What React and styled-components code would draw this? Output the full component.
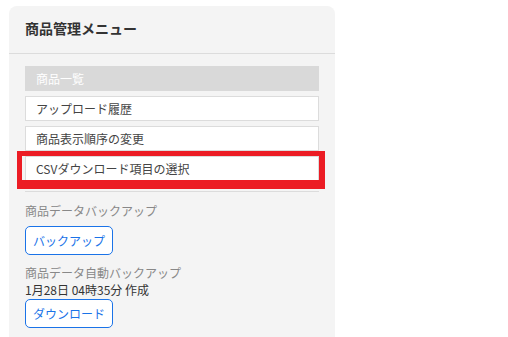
import React from "react";
import styled, { createGlobalStyle } from "styled-components";

const menuItems = [
  { label: "商品一覧", active: true },
  { label: "アップロード履歴" },
  { label: "商品表示順序の変更" },
  { label: "CSVダウンロード項目の選択", highlight: true },
];

export default function App() {
  return (
    <>
      <GlobalStyle />
      <Page>
        <Panel>
          <Header>商品管理メニュー</Header>
          <Body>
            <MenuList>
              {menuItems.map((item) => (
                <MenuItem key={item.label} $active={item.active}>
                  {item.label}
                  {item.highlight && <Highlight />}
                </MenuItem>
              ))}
            </MenuList>
            <Divider />
            <SectionLabel $top={10}>商品データバックアップ</SectionLabel>
            <ActionButton $top={6}>バックアップ</ActionButton>
            <SectionLabel $top={9}>商品データ自動バックアップ</SectionLabel>
            <DateText>1月28日 04時35分 作成</DateText>
            <ActionButton $top={0}>ダウンロード</ActionButton>
          </Body>
        </Panel>
      </Page>
    </>
  );
}

const GlobalStyle = createGlobalStyle`
  body {
    margin: 0;
    background: #ffffff;
    font-family: "Noto Sans CJK JP", "Noto Sans", sans-serif;
  }
`;

const Page = styled.div`
  padding: 6px 0 0 9px;
`;

const Panel = styled.div`
  width: 326px;
  min-height: 331px;
  background: #f4f4f4;
  border-radius: 8px 8px 0 0;
`;

const Header = styled.div`
  height: 48px;
  box-sizing: border-box;
  padding: 0 16px 3px;
  display: flex;
  align-items: center;
  border-bottom: 1px solid #dcdcdc;
  font-size: 14px;
  font-weight: bold;
  color: #333;
`;

const Body = styled.div`
  padding: 12px 16px 0;
  display: flex;
  flex-direction: column;
  align-items: flex-start;
`;

const MenuList = styled.div`
  width: 100%;
  display: flex;
  flex-direction: column;
  gap: 5px;
`;

const MenuItem = styled.div`
  position: relative;
  height: 25px;
  box-sizing: border-box;
  padding-left: 10px;
  display: flex;
  align-items: center;
  font-size: 12px;
  color: ${(p) => (p.$active ? "#ffffff" : "#444")};
  background: ${(p) => (p.$active ? "#d9d9d9" : "#ffffff")};
  border: 1px solid ${(p) => (p.$active ? "#d9d9d9" : "#dcdcdc")};
`;

const Highlight = styled.div`
  position: absolute;
  top: -6px;
  left: -9px;
  right: -7px;
  bottom: -9px;
  border: solid #ec1c24;
  border-width: 5px 6px 9px 5px;
`;

const Divider = styled.div`
  width: 100%;
  margin-top: 10px;
  border-top: 1px solid #dcdcdc;
`;

const SectionLabel = styled.div`
  margin-top: ${(p) => p.$top}px;
  font-size: 12px;
  line-height: 17.5px;
  color: #888;
`;

const DateText = styled.div`
  font-size: 12px;
  line-height: 17.5px;
  color: #333;
`;

const ActionButton = styled.button`
  margin-top: ${(p) => p.$top}px;
  width: 88px;
  height: 29px;
  padding: 0;
  background: #ffffff;
  border: 1px solid #1a73e8;
  border-radius: 5px;
  font-family: inherit;
  font-size: 12px;
  color: #1a73e8;
`;
